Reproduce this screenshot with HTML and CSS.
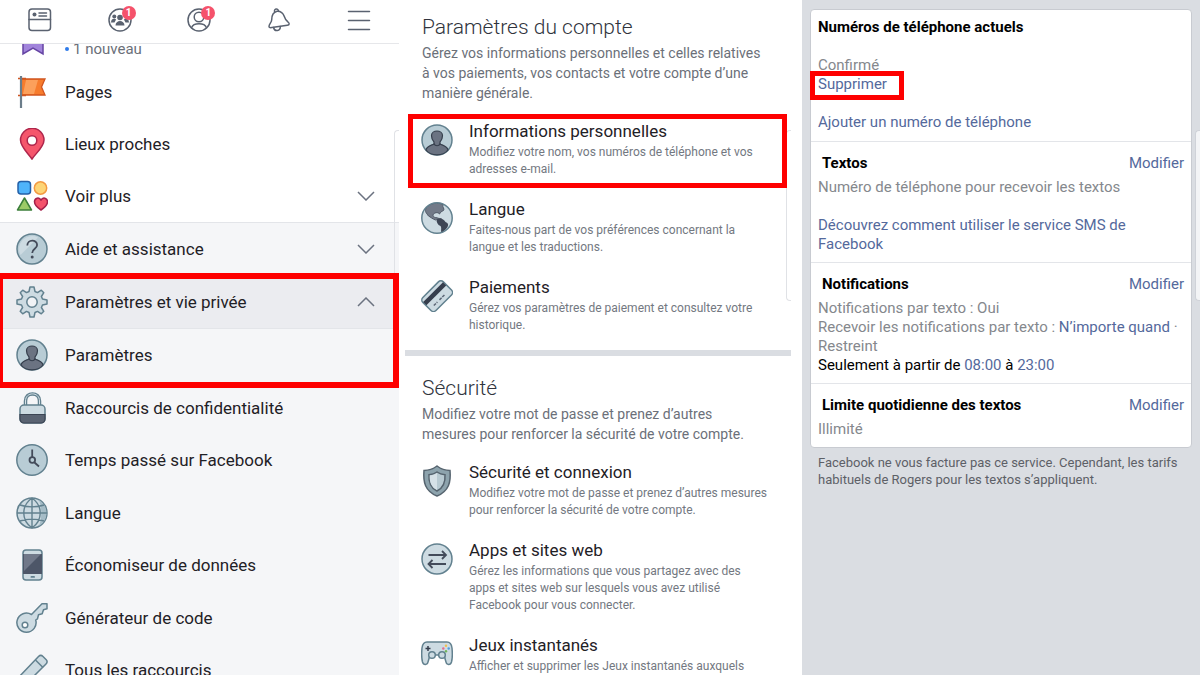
FILE: index.html
```html
<!DOCTYPE html>
<html lang="fr">

<head>
    <meta charset="UTF-8">
    <meta name="viewport" content="width=device-width, initial-scale=1.0">
    <title>Paramètres</title>
    <link rel="stylesheet" href="styles.css">
</head>

<body>
    <div class="screens">
        <!-- Menu -->
        <section class="screen menu">
            <nav class="tabs">
                <button type="button" class="tab" aria-label="Fil d’actualité">
                    <svg class="tab-icon" viewBox="0 0 24 24">
                        <rect x="1" y="1" width="21.500" height="21.500" rx="3" />
                        <path d="M1 11.500h21.500M11 5h7.500M11 8h7.500" />
                        <circle class="solid" cx="6.500" cy="6.500" r="2" />
                    </svg>
                </button>
                <button type="button" class="tab" aria-label="Groupes">
                    <svg class="tab-icon" viewBox="0 0 24 24">
                        <circle cx="12" cy="12" r="11" />
                        <g class="solid">
                            <circle cx="12" cy="9.500" r="2.800" />
                            <circle cx="6.300" cy="8.500" r="2" />
                            <circle cx="17.700" cy="8.500" r="2" />
                            <path d="M7.500 17.500c0-6 9-6 9 0zM3 14.500c0-4 3.500-4.400 5.100-3.100L6.500 14.500zM21 14.500c0-4-3.500-4.400-5.100-3.100l1.600 3.100z" />
                        </g>
                    </svg>
                    <span class="badge">1</span>
                </button>
                <button type="button" class="tab" aria-label="Profil">
                    <svg class="tab-icon" viewBox="0 0 24 24">
                        <circle cx="12" cy="12" r="11" />
                        <circle cx="12" cy="9" r="4.800" />
                        <path d="M4.500 19.700c2-5.300 13-5.300 15 0" />
                    </svg>
                    <span class="badge">1</span>
                </button>
                <button type="button" class="tab" aria-label="Notifications">
                    <svg class="tab-icon" viewBox="0 0 24 24">
                        <path d="M10 3.200c-4 1-5.300 4.500-5.300 8.500 0 3-3.200 4.500-2.700 7.100.3 1.200 1.700 1 2.800.8l15.500-2.300c2.500-.4 2.200-2.300.7-3.300-2.300-1.400-3-3.200-3.800-5.700C16 4.700 13.800 3 10 3.200z" />
                        <path d="M7.500 3.600c-.4-3.400 3.800-3.600 4-.3M6.500 19.500c1 4.500 7 3.800 6.800-1" />
                    </svg>
                </button>
                <button type="button" class="tab" aria-label="Menu">
                    <svg class="tab-icon" viewBox="0 0 24 24">
                        <path d="M1.500 3.500h21M1.500 12.500h21M1.500 21.500h21" />
                    </svg>
                </button>
            </nav>

            <div class="group group-white">
                <a href="#enregistre" class="row row-cut">
                    <svg class="icon" viewBox="0 0 32 32">
                        <path d="M7 2h20v26l-10-6-10 6z" fill="#a184db" stroke="#6544a3" stroke-width="1.500" />
                    </svg>
                    <span class="news"><i class="dot"></i>1 nouveau</span>
                </a>
                <a href="#pages" class="row">
                    <svg class="icon" viewBox="0 0 32 32">
                        <path d="M5 3h24l-3.500 8L29 19H5z" fill="#f77c2d" stroke="#d1551f" stroke-width="1.300" />
                        <path d="M10 4h12l-4 14H7z" fill="#fca05b" />
                        <path d="M2 2.500h8M2 19.500h8" stroke="#d1551f" stroke-width="1.500" />
                        <path d="M5 0v32" stroke="#6b7d8a" stroke-width="2.200" />
                    </svg>
                    <span>Pages</span>
                </a>
                <a href="#lieux" class="row">
                    <svg class="icon" viewBox="0 0 32 32">
                        <path d="M16 31C12 25 4.500 19 4.500 12a11.700 11.700 0 0 1 23.500 0C28 19 20 25 16 31z" fill="#f5566c" stroke="#ae264c" stroke-width="1.500" />
                        <circle cx="16" cy="12.500" r="4.800" fill="#fff" stroke="#ae264c" stroke-width="1.500" />
                    </svg>
                    <span>Lieux proches</span>
                </a>
                <button type="button" class="row">
                    <svg class="icon" viewBox="0 0 32 32" stroke-width="1.500" stroke-linejoin="round">
                        <rect x="2" y="1.500" width="12.500" height="12.500" rx="3" fill="#4fb4fb" stroke="#2460a8" />
                        <circle cx="24.500" cy="8" r="6.200" fill="#fdd577" stroke="#f39a42" />
                        <path d="M8.500 18l7 12h-14z" fill="#9ccb67" stroke="#3c7f3b" />
                        <path d="M25 30c-4-2.600-6.500-5-6.500-8.200 0-4 4.800-5 6.500-1.600 1.700-3.400 6.500-2.400 6.500 1.600 0 3.200-2.500 5.600-6.500 8.200z" fill="#f4526b" stroke="#a4204a" />
                    </svg>
                    <span>Voir plus</span>
                    <svg class="chevron" viewBox="0 0 18 10"><path d="M1 1l8 8 8-8" /></svg>
                </button>
            </div>

            <div class="group">
                <button type="button" class="row row-line">
                    <svg class="icon" viewBox="0 0 32 32">
                        <circle class="line fill-mid" cx="16" cy="16" r="15" />
                        <path class="fill-light" d="M4.500 22A13 13 0 0 1 22 4.500z" />
                        <path class="ink" d="M11.300 12.500c0-6.500 9.800-6.300 9.800-.6 0 4-4.900 3.700-4.900 8.100" />
                        <circle cx="16.200" cy="24" r="1.500" fill="#434b5a" />
                    </svg>
                    <span>Aide et assistance</span>
                    <svg class="chevron" viewBox="0 0 18 10"><path d="M1 1l8 8 8-8" /></svg>
                </button>
                <div class="highlight highlight-menu">
                    <button type="button" class="row row-line row-open">
                        <svg class="icon" viewBox="0 0 32 32">
                            <path class="line fill-light" stroke-linejoin="round" d="M14 1H18L19 5.500 21.500 6.600 25.300 4.200 27.800 6.700 25.400 10.500 26.500 13 31 14V18L26.500 19 25.400 21.500 27.800 25.300 25.300 27.800 21.500 25.400 19 26.500 18 31H14L13 26.500 10.500 25.400 6.700 27.800 4.200 25.300 6.600 21.500 5.500 19 1 18V14L5.500 13 6.600 10.500 4.200 6.700 6.700 4.200 10.500 6.600 13 5.500z" />
                            <circle cx="16" cy="16" r="5.200" fill="#f1f3f6" stroke="#62818f" stroke-width="1.500" />
                        </svg>
                        <span>Paramètres et vie privée</span>
                        <svg class="chevron" viewBox="0 0 18 10"><path d="M1 9l8-8 8 8" /></svg>
                    </button>
                    <a href="#parametres" class="row">
                        <svg class="icon" viewBox="0 0 32 32">
                            <circle class="line fill-mid" cx="16" cy="16" r="15" />
                            <path d="M5 26c1-4 5-4.500 8-6v-2c-2-2-2.500-4-2.500-6.500 0-6 11-6 11 0 0 2.500-.5 4.500-2.500 6.500v2c3 1.500 7 2 8 6-5 6.500-17 6.500-22 0z" fill="#6b7382" stroke="#363f4d" stroke-width="1.200" />
                            <path d="M12.800 19.500c1.500 3 5 3 6.500 0" fill="none" stroke="#363f4d" stroke-width="1.200" />
                        </svg>
                        <span>Paramètres</span>
                    </a>
                </div>
                <div class="subrows">
                    <a href="#raccourcis" class="row">
                        <svg class="icon" viewBox="0 0 32 32">
                            <path d="M9.500 14V9c0-9.500 14-9.500 14 0v5" fill="none" stroke="#62818f" stroke-width="3.500" />
                            <path d="M9.500 14V9c0-9.500 14-9.500 14 0v5" fill="none" stroke="#d6e1e7" stroke-width="1" />
                            <rect class="line fill-light" x="4" y="13" width="25" height="18" rx="4" />
                            <path d="M4 22.500h25V27a4 4 0 0 1-4 4H8a4 4 0 0 1-4-4z" fill="#5a6372" stroke="#3c4554" stroke-width="1.200" />
                        </svg>
                        <span>Raccourcis de confidentialité</span>
                    </a>
                    <a href="#temps" class="row">
                        <svg class="icon" viewBox="0 0 32 32">
                            <circle class="line fill-mid" cx="16" cy="16" r="15.200" />
                            <path class="ink" d="M16.200 5.500V13M18.500 18.500l4.500 4" />
                            <circle class="ink" cx="16.300" cy="16" r="2.800" />
                        </svg>
                        <span>Temps passé sur Facebook</span>
                    </a>
                    <a href="#langue" class="row">
                        <svg class="icon" viewBox="0 0 32 32">
                            <circle class="line fill-light" cx="16" cy="16" r="15" />
                            <path d="M23 3c10 6 10 20 0 26 3-8 3-18 0-26z" fill="#a5bcc7" />
                            <path d="M16 1v30M1 16h30M4 8c7 2.500 17 2.500 24 0M4 24c7-2.500 17-2.500 24 0M16 1c-11 8-11 22 0 30M16 1c11 8 11 22 0 30" fill="none" stroke="#62818f" stroke-width="1.400" />
                        </svg>
                        <span>Langue</span>
                    </a>
                    <a href="#donnees" class="row">
                        <svg class="icon" viewBox="0 0 32 32">
                            <rect class="line fill-light" x="7" y="1" width="19" height="30" rx="3" />
                            <path d="M7 5h19v20H7z" fill="#4d5668" />
                            <path d="M8 5h17L8 22z" fill="#707889" />
                            <rect x="14.500" y="27" width="4.500" height="1.800" rx="1" fill="#62818f" />
                        </svg>
                        <span>Économiseur de données</span>
                    </a>
                    <a href="#code" class="row">
                        <svg class="icon" viewBox="0 0 32 32">
                            <path class="line fill-light" stroke-linejoin="round" d="M15.500 12.500L26 1.700l5 .1v5l-3.500 1-1.300 4-3.700 1-1 4-1.800 1.200A9.600 9.600 0 1 1 15.500 12.500z" />
                            <circle cx="9" cy="23" r="2.800" fill="#fff" stroke="#62818f" stroke-width="1.500" />
                        </svg>
                        <span>Générateur de code</span>
                    </a>
                    <a href="#tous" class="row">
                        <svg class="icon" viewBox="0 0 32 32">
                            <path class="line fill-light" stroke-linejoin="round" d="M2 24L22.500 2.500c1.500-1.500 3-1.500 4.500 0l3 3c1.500 1.500 1.500 3 0 4.500L9 31H2z" />
                            <path class="line" fill="none" d="M19.500 6l7.500 7.500" />
                        </svg>
                        <span>Tous les raccourcis</span>
                    </a>
                </div>
            </div>
        </section>

        <!-- Account settings -->
        <section class="screen settings">
            <div class="block">
                <h1>Paramètres du compte</h1>
                <p class="intro">Gérez vos informations personnelles et celles relatives à vos paiements, vos contacts et votre compte d’une manière générale.</p>
                <div class="items">
                    <a href="#infos" class="item highlight highlight-item">
                        <svg class="icon" viewBox="0 0 32 32">
                            <circle class="line fill-mid" cx="16" cy="16" r="15" />
                            <path d="M5 26c1-4 5-4.500 8-6v-2c-2-2-2.500-4-2.500-6.500 0-6 11-6 11 0 0 2.500-.5 4.500-2.500 6.500v2c3 1.500 7 2 8 6-5 6.500-17 6.500-22 0z" fill="#6b7382" stroke="#363f4d" stroke-width="1.200" />
                            <path d="M12.800 19.500c1.500 3 5 3 6.500 0" fill="none" stroke="#363f4d" stroke-width="1.200" />
                        </svg>
                        <div>
                            <h2>Informations personnelles</h2>
                            <p>Modifiez votre nom, vos numéros de téléphone et vos adresses e-mail.</p>
                        </div>
                    </a>
                    <a href="#langue" class="item">
                        <svg class="icon" viewBox="0 0 32 32">
                            <circle class="fill-light" cx="16" cy="16" r="15" />
                            <path d="M5 6C9 1 17 0 22 2.500c-1 3 2 4 .5 6-2 1-3 1.500-4 3.500-2-2.500-5-1-6 0-1.500 2 1 4 3 3.500 2 1.500 4 .5 5 1.500-3 1-5-.5-6 1-3-1-5-3-7-4-2-3-4-4-2.500-8z" fill="#727a88" stroke="#505967" />
                            <path d="M15.500 17.500c4-2 7-.5 9 2.500 3 1 3 3 2 5-2 3-4 4.500-6 6-1-3 .5-5-1-7-3-1-4-4-4-6.500z" fill="#3e4655" />
                            <circle class="line" fill="none" cx="16" cy="16" r="15.200" />
                        </svg>
                        <div>
                            <h2>Langue</h2>
                            <p>Faites-nous part de vos préférences concernant la langue et les traductions.</p>
                        </div>
                    </a>
                    <a href="#paiements" class="item">
                        <svg class="icon" viewBox="0 0 32 32">
                            <g transform="rotate(-45 16 16)">
                                <rect class="line fill-light" x="1.500" y="7" width="29" height="18.500" rx="3.500" />
                                <path d="M2 10.500h28v4.500H2z" fill="#363e4d" />
                                <path d="M7 20.500h5M15 20.500h8" stroke="#5b6675" stroke-width="1.500" stroke-dasharray="3 1" />
                            </g>
                        </svg>
                        <div>
                            <h2>Paiements</h2>
                            <p>Gérez vos paramètres de paiement et consultez votre historique.</p>
                        </div>
                    </a>
                </div>
            </div>
            <hr class="separator">
            <div class="block">
                <h1>Sécurité</h1>
                <p class="intro">Modifiez votre mot de passe et prenez d’autres mesures pour renforcer la sécurité de votre compte.</p>
                <div class="items">
                    <a href="#securite" class="item">
                        <svg class="icon" viewBox="0 0 32 32">
                            <path d="M16 1c4 3 8 4.500 13 4.500C30 17 28 26 16 31 4 26 2 17 3 5.500 8 5.500 12 4 16 1z" fill="#8da3ad" stroke="#56646f" stroke-width="1.500" />
                            <path d="M16 7c2.500 1.800 5 2.500 8 2.700C24.500 17 23 22.500 16 26 9 22.500 7.500 17 8 9.700c3-.2 5.500-.9 8-2.700z" fill="#b8cad2" stroke="#56646f" stroke-width="1.500" />
                            <path d="M16 8v17C10 22 8.500 17 8.800 10.500c2.700-.3 5-1 7.200-2.500z" fill="#d6e1e7" />
                        </svg>
                        <div>
                            <h2>Sécurité et connexion</h2>
                            <p>Modifiez votre mot de passe et prenez d’autres mesures pour renforcer la sécurité de votre compte.</p>
                        </div>
                    </a>
                    <a href="#apps" class="item">
                        <svg class="icon" viewBox="0 0 32 32">
                            <circle class="line fill-light" cx="16" cy="16" r="15" />
                            <path class="ink" d="M7.500 12H25M21 8l4 4-4 4M25 21H7.500M11.500 17l-4 4 4 4" />
                        </svg>
                        <div>
                            <h2>Apps et sites web</h2>
                            <p>Gérez les informations que vous partagez avec des apps et sites web sur lesquels vous avez utilisé Facebook pour vous connecter.</p>
                        </div>
                    </a>
                    <a href="#jeux" class="item">
                        <svg class="icon" viewBox="0 0 32 32">
                            <path class="line fill-light" d="M6 4h20c3 0 4.500 2 5 6 .5 5 .5 10-.5 14-1 3.500-5 3-5.500 0l-2-7H9l-2 7c-.5 3-4.500 3.500-5.500 0C.5 20 .5 15 1 10c.5-4 2-6 5-6z" />
                            <circle class="line fill-light" cx="11" cy="17" r="3.300" />
                            <circle class="line fill-light" cx="21" cy="17" r="3.300" />
                            <path d="M7 8v5M4.500 10.500h5" stroke="#363e4d" stroke-width="1.500" />
                            <circle cx="25" cy="7.800" r="1.200" fill="#f3bf4a" />
                            <circle cx="25" cy="13.200" r="1.200" fill="#74b65d" />
                            <circle cx="22.300" cy="10.500" r="1.200" fill="#e36c8c" />
                            <circle cx="27.700" cy="10.500" r="1.200" fill="#4d9fe0" />
                        </svg>
                        <div>
                            <h2>Jeux instantanés</h2>
                            <p>Afficher et supprimer les Jeux instantanés auxquels vous avez joué.</p>
                        </div>
                    </a>
                </div>
            </div>
        </section>

        <!-- Phone numbers -->
        <section class="screen phones">
            <div class="card">
                <div class="card-section card-first">
                    <h3>Numéros de téléphone actuels</h3>
                    <p><br>Confirmé<br><a href="#supprimer" class="highlight highlight-link">Supprimer</a></p>
                    <p><br><a href="#ajouter">Ajouter un numéro de téléphone</a></p>
                </div>
                <div class="card-section">
                    <div class="card-head">
                        <h3>Textos</h3>
                        <a href="#textos">Modifier</a>
                    </div>
                    <p>Numéro de téléphone pour recevoir les textos<br><br></p>
                    <p><a href="#sms">Découvrez comment utiliser le service SMS de Facebook</a></p>
                </div>
                <div class="card-section">
                    <div class="card-head">
                        <h3>Notifications</h3>
                        <a href="#notifications">Modifier</a>
                    </div>
                    <p>Notifications par texto : Oui</p>
                    <p>Recevoir les notifications par texto : <a href="#quand">N’importe quand</a> · Restreint</p>
                    <p class="dark">Seulement à partir de <a href="#debut">08:00</a> à <a href="#fin">23:00</a></p>
                </div>
                <div class="card-section">
                    <div class="card-head">
                        <h3>Limite quotidienne des textos</h3>
                        <a href="#limite">Modifier</a>
                    </div>
                    <p>Illimité</p>
                </div>
            </div>
            <p class="footnote">Facebook ne vous facture pas ce service. Cependant, les tarifs habituels de Rogers pour les textos s’appliquent.</p>
        </section>
    </div>
</body>

</html>
```
FILE: styles.css
```css
/* General Styles */
* {
    box-sizing: border-box;
}

body {
    font-family: Roboto, "Liberation Sans", sans-serif;
    margin: 0;
    color: #1f2126;
    background-color: #fff;
}

h1,
h2,
h3,
p {
    margin: 0;
}

a {
    color: #54699c;
    text-decoration: none;
}

button {
    font: inherit;
    color: inherit;
    border: none;
    background: none;
    padding: 0;
    cursor: pointer;
}

.screens {
    display: grid;
    grid-template-columns: 399fr 403fr 398fr;
    height: 100vh;
    overflow: hidden;
}

.screen {
    position: relative;
    min-width: 0;
}

/* Edge panel handle */
.screen::after {
    content: "";
    position: absolute;
    top: 130px;
    right: 0;
    width: 4px;
    height: 169px;
    border: 1px solid #e0e2e6;
    border-right: none;
    border-radius: 4px 0 0 4px;
}

/* Red frames */
.highlight {
    position: relative;
}

.highlight::after {
    content: "";
    position: absolute;
    border: 5px solid #fe0000;
    z-index: 2;
    pointer-events: none;
}

.highlight-menu::after {
    inset: -3px 0 -7px -3px;
    border-width: 6px;
}

.highlight-item::after {
    inset: -6px -19px -10px -14px;
}

.highlight-link::after {
    inset: -4px -17px -6px -8px;
}

/* Icons */
.icon {
    width: 32px;
    height: 32px;
    flex: none;
}

.line {
    stroke: #62818f;
    stroke-width: 1.5;
}

.fill-light {
    fill: #cddbe2;
}

.fill-mid {
    fill: #b8ccd5;
}

.ink {
    fill: none;
    stroke: #434b5a;
    stroke-width: 1.8;
}

/* Menu */
.menu {
    background-color: #f5f6f8;
}

.tabs {
    display: flex;
    height: 44px;
    padding-bottom: 3px;
    background-color: #fff;
    border-bottom: 1px solid #e6e7ea;
}

.tab {
    position: relative;
    flex: 1;
    display: flex;
    align-items: center;
    justify-content: center;
}

.tab-icon {
    width: 24px;
    height: 24px;
    fill: none;
    stroke: #5a6270;
    stroke-width: 1.5;
    stroke-linecap: round;
}

.tab-icon .solid {
    fill: #5a6270;
    stroke: none;
}

.badge {
    position: absolute;
    top: 6px;
    left: calc(50% + 2px);
    width: 14px;
    height: 14px;
    border-radius: 50%;
    background-color: #f5526b;
    color: #fff;
    font-size: 10px;
    font-weight: bold;
    line-height: 14px;
    text-align: center;
}

.group-white {
    background-color: #fff;
    border-bottom: 1px solid #e3e5e9;
}

.row {
    display: flex;
    align-items: center;
    gap: 17px;
    width: 100%;
    height: 52px;
    padding: 0 24px 0 16px;
    color: #1f2126;
    font-size: 17px;
    text-align: left;
}

.subrows .row:nth-child(odd) {
    height: 53px;
}

.row-cut {
    height: 22px;
    align-items: flex-end;
    padding-bottom: 8px;
    overflow: hidden;
}

.row-line {
    height: 53px;
    border-bottom: 1px solid #e3e5e9;
}

.row-open {
    background-color: #ebecf0;
}

.news {
    display: flex;
    align-items: center;
    gap: 4px;
    color: #6b7079;
    font-size: 15px;
    line-height: 18px;
}

.dot {
    width: 4px;
    height: 4px;
    border-radius: 50%;
    background-color: #2f7bea;
}

.chevron {
    width: 18px;
    height: 10px;
    margin-left: auto;
    fill: none;
    stroke: #6b7280;
    stroke-width: 1.5;
}

/* Settings */
.settings {
    background-color: #fff;
}

.settings::after {
    right: 11px;
}

.block {
    padding: 13px 18px 16px 23px;
}

.separator {
    height: 6px;
    margin: 0 11px 5px 6px;
    border: none;
    background-color: #dadde2;
}

h1 {
    color: #30343d;
    font-size: 21px;
    font-weight: 300;
    line-height: 28px;
}

.intro {
    margin: 2px 0 17px;
    padding-right: 20px;
    color: #6b7079;
    font-size: 14px;
    line-height: 20px;
}

.items {
    display: flex;
    flex-direction: column;
    gap: 20px;
    padding-right: 16px;
}

.item {
    display: flex;
    gap: 16px;
    color: #1f2126;
}

.item .icon {
    margin: 4px 0 0 -1px;
}

.item h2 {
    font-size: 17px;
    font-weight: 400;
    line-height: 22px;
}

.item p {
    margin-top: 2px;
    color: #737881;
    font-size: 12px;
    line-height: 17px;
}

/* Phone numbers */
.phones {
    padding: 9px 8px;
    background-color: #dadde2;
}

.phones::after {
    border-color: #cfd2d8;
    background-color: #f3f4f6;
}

.card {
    background-color: #fff;
    border: 1px solid #c8cbd1;
    border-radius: 4px;
    color: #85888d;
    font-size: 15px;
    line-height: 19px;
}

.card-section {
    padding: 11px 7px 8px;
    border-bottom: 1px solid #e3e5e9;
}

.card-section:last-child {
    border-bottom: none;
}

.card-first {
    padding: 7px 7px 9px;
}

.card h3 {
    color: #000;
    font-size: 15px;
    font-weight: 700;
    line-height: 20px;
}

.card-head {
    display: flex;
    justify-content: space-between;
    align-items: center;
    margin-bottom: 5px;
    padding-left: 4px;
}

.dark {
    color: #000;
}

.highlight-link {
    display: inline-block;
}

.footnote {
    padding: 6px 8px;
    color: #5d6067;
    font-size: 13px;
    line-height: 17px;
}
```
